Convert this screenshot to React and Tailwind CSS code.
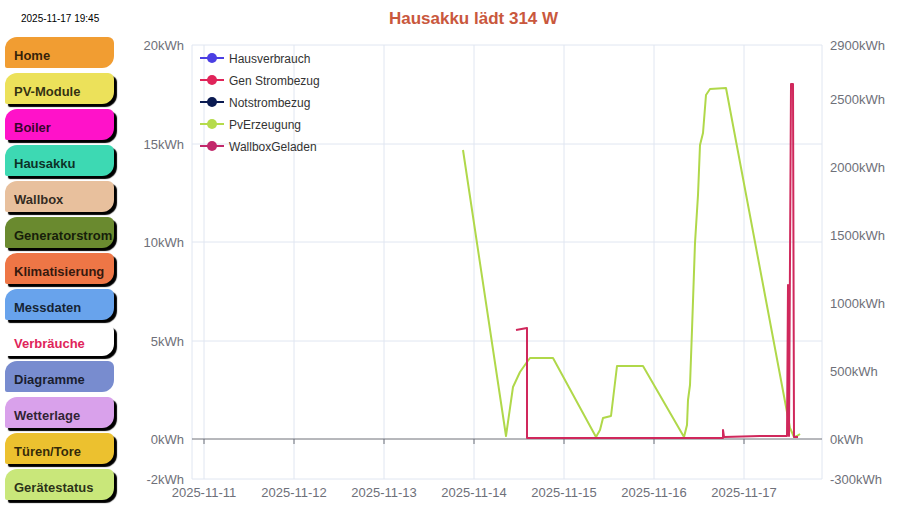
import React from "react";

const navItems = [
  { label: "Home", bg: "bg-[#f19d32]", shadow: false },
  { label: "PV-Module", bg: "bg-[#ece15a]", shadow: true },
  { label: "Boiler", bg: "bg-[#ff12c9]", shadow: true },
  { label: "Hausakku", bg: "bg-[#3dd9b3]", shadow: true },
  { label: "Wallbox", bg: "bg-[#e8c09d]", shadow: true },
  { label: "Generatorstrom", bg: "bg-[#6a8a2f]", shadow: true },
  { label: "Klimatisierung", bg: "bg-[#ee7646]", shadow: true },
  { label: "Messdaten", bg: "bg-[#68a3ec]", shadow: true },
  { label: "Verbräuche", bg: "bg-white", shadow: true, text: "text-[#e0245a]" },
  { label: "Diagramme", bg: "bg-[#788ccf]", shadow: false },
  { label: "Wetterlage", bg: "bg-[#d9a1eb]", shadow: true },
  { label: "Türen/Tore", bg: "bg-[#ecc12f]", shadow: true },
  { label: "Gerätestatus", bg: "bg-[#c9e77a]", shadow: true },
];

const legend = [
  { label: "Hausverbrauch", color: "#4b3fe3" },
  { label: "Gen Strombezug", color: "#e0245a" },
  { label: "Notstrombezug", color: "#0b1b52" },
  { label: "PvErzeugung", color: "#b5db4b" },
  { label: "WallboxGeladen", color: "#c2286b" },
];

// y pixel rows for the left / right axis
const leftTicks = [
  ["20kWh", 45],
  ["15kWh", 144],
  ["10kWh", 242],
  ["5kWh", 341],
  ["0kWh", 439],
  ["-2kWh", 479],
];
const rightTicks = [
  ["2900kWh", 45],
  ["2500kWh", 99],
  ["2000kWh", 167],
  ["1500kWh", 235],
  ["1000kWh", 303],
  ["500kWh", 371],
  ["0kWh", 439],
  ["-300kWh", 479],
];
const days = [
  "2025-11-11",
  "2025-11-12",
  "2025-11-13",
  "2025-11-14",
  "2025-11-15",
  "2025-11-16",
  "2025-11-17",
];

const pvLine =
  "463,150 506,436 513,387 520,372 527,362 530,358 553,358 596,437 600,430 603,418 611,416 617,366 643,366 684,437 687,425 688,400 690,385 692,330 695,243 698,195 700,145 703,133 706,95 710,89 726,88 790,428 794,437 797,436 800,434";
const redLine =
  "516,330 527,328 527,438 723,438 723,430 724,437 760,436 787,436 788,285 789,436 791,84 793,84 794,437 798,437";

const Chart = () => {
  const font = "'Liberation Sans', Arial, sans-serif";
  return (
    <svg width="787" height="479" viewBox="130 36 787 479" className="block">
      {/* grid */}
      {[45, 144, 242, 341, 479].map((y) => (
        <line key={y} x1="192" x2="822" y1={y} y2={y} stroke="#e0e6f1" />
      ))}
      {[192, 822].map((x) => (
        <line key={x} x1={x} x2={x} y1="45" y2="479" stroke="#e0e6f1" />
      ))}
      {days.map((d, i) => (
        <line key={d} x1={204 + 90 * i} x2={204 + 90 * i} y1="45" y2="479" stroke="#e0e6f1" />
      ))}
      <line x1="192" x2="822" y1="439" y2="439" stroke="#6e7079" />
      {days.map((d, i) => (
        <line key={d + "t"} x1={204 + 90 * i} x2={204 + 90 * i} y1="439" y2="444" stroke="#6e7079" />
      ))}

      {/* axis labels */}
      {leftTicks.map(([t, y]) => (
        <text key={t} x="184" y={y + 5} textAnchor="end" fontSize="13" fill="#6e7079" fontFamily={font}>
          {t}
        </text>
      ))}
      {rightTicks.map(([t, y]) => (
        <text key={t} x="830" y={y + 5} fontSize="13" fill="#6e7079" fontFamily={font}>
          {t}
        </text>
      ))}
      {days.map((d, i) => (
        <text key={d + "l"} x={204 + 90 * i} y="497" textAnchor="middle" fontSize="13" fill="#6e7079" fontFamily={font}>
          {d}
        </text>
      ))}

      {/* series */}
      <polyline points={pvLine} fill="none" stroke="#b0d84a" strokeWidth="2" strokeLinejoin="round" />
      <polyline points={redLine} fill="none" stroke="#d0285c" strokeWidth="2" strokeLinejoin="round" />

      {/* legend */}
      {legend.map((l, i) => (
        <g key={l.label}>
          <line x1="200" x2="224" y1={58 + 22 * i} y2={58 + 22 * i} stroke={l.color} strokeWidth="2" />
          <circle cx="212" cy={58 + 22 * i} r="5" fill={l.color} />
          <text x="229" y={63 + 22 * i} fontSize="12" fill="#333" fontFamily={font}>
            {l.label}
          </text>
        </g>
      ))}
    </svg>
  );
};

export default function App() {
  return (
    <div className="w-[917px] h-[515px] flex bg-white overflow-hidden font-['Liberation_Sans',Arial,sans-serif]">
      {/* Sidebar */}
      <div className="w-[130px] shrink-0 flex flex-col">
        <div className="pt-[13px] pl-[21px] text-[10px] leading-[12px] text-black">2025-11-17 19:45</div>
        <div className="mt-[12px] ml-[5px] flex flex-col gap-[5px]">
          {navItems.map((n) => (
            <div
              key={n.label}
              className={`w-[109px] h-[31px] flex items-center pt-[7px] pl-[9px] text-[13px] font-bold rounded-tl-[12px] rounded-tr-[6px] rounded-br-[12px] rounded-bl-[2px] ${n.bg} ${
                n.text ? n.text : "text-black/80"
              } ${n.shadow ? "shadow-[3px_3px_1px_#000]" : ""}`}
            >
              {n.label}
            </div>
          ))}
        </div>
      </div>

      {/* Main */}
      <div className="flex-1 flex flex-col">
        <div className="h-[36px] flex items-center justify-center pt-[2px] pr-[100px] text-[17px] font-bold text-[#c9583d]">
          Hausakku lädt 314 W
        </div>
        <Chart />
      </div>
    </div>
  );
}
